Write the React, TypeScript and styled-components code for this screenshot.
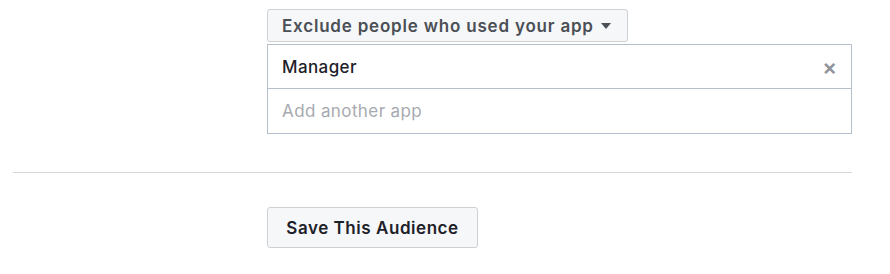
import styled, { createGlobalStyle } from "styled-components";

const GlobalStyle = createGlobalStyle`
  body {
    margin: 0;
    background: #ffffff;
    font-family: Inter, "Liberation Sans", Arial, sans-serif;
  }
`;

const Page = styled.div`
  width: 839px;
  padding: 9px 0 0 13px;
`;

const Section = styled.div`
  display: flex;
  flex-direction: column;
  align-items: flex-start;
  padding-left: 254px;
`;

const DropButton = styled.button`
  display: flex;
  align-items: center;
  gap: 7px;
  height: 33px;
  padding: 0 16px 0 14px;
  background: #f6f7f9;
  border: 1px solid #ced0d4;
  border-radius: 3px;
  color: #4b4f56;
  font-family: inherit;
  font-size: 17px;
  font-weight: 600;
  letter-spacing: 0.8px;
  cursor: pointer;
`;

const Caret = styled.span`
  width: 0;
  height: 0;
  border-left: 5px solid transparent;
  border-right: 5px solid transparent;
  border-top: 6px solid #4b4f56;
  margin-top: 1px;
`;

const AppBox = styled.div`
  margin-top: 2px;
  width: 583px;
  border: 1px solid #b3bfcb;
`;

const Row = styled.div<{ $last?: boolean }>`
  display: flex;
  align-items: center;
  justify-content: space-between;
  height: 44px;
  padding: 0 14px;
  border-bottom: ${(p) => (p.$last ? "none" : "1px solid #b3bfcb")};
  box-sizing: border-box;
`;

const AppName = styled.span`
  color: #1d2129;
  font-size: 17px;
  font-weight: 500;
  letter-spacing: 0.4px;
`;

const Placeholder = styled.input`
  border: none;
  outline: none;
  padding: 0;
  width: 100%;
  font-family: inherit;
  font-size: 17px;
  letter-spacing: 0.4px;
  color: #1d2129;
  &::placeholder {
    color: #a7aab0;
  }
`;

const Remove = styled.span`
  color: #90949c;
  font-size: 22px;
  font-weight: 600;
  line-height: 1;
  cursor: pointer;
`;

const Divider = styled.hr`
  margin: 38px 0 0 0;
  border: none;
  border-top: 1px solid #d3d6db;
  width: 839px;
`;

const Footer = styled(Section)`
  padding-top: 34px;
`;

const SaveButton = styled.button`
  height: 41px;
  width: 211px;
  background: #f6f7f9;
  border: 1px solid #ced0d4;
  border-radius: 3px;
  color: #1d2129;
  font-family: inherit;
  font-size: 17px;
  font-weight: 600;
  letter-spacing: 0.55px;
  cursor: pointer;
`;

export default function App() {
  return (
    <>
      <GlobalStyle />
      <Page>
        <Section>
          <DropButton>
            Exclude people who used your app
            <Caret />
          </DropButton>
          <AppBox>
            <Row>
              <AppName>Manager</AppName>
              <Remove>×</Remove>
            </Row>
            <Row $last>
              <Placeholder placeholder="Add another app" />
            </Row>
          </AppBox>
        </Section>
        <Divider />
        <Footer>
          <SaveButton>Save This Audience</SaveButton>
        </Footer>
      </Page>
    </>
  );
}
